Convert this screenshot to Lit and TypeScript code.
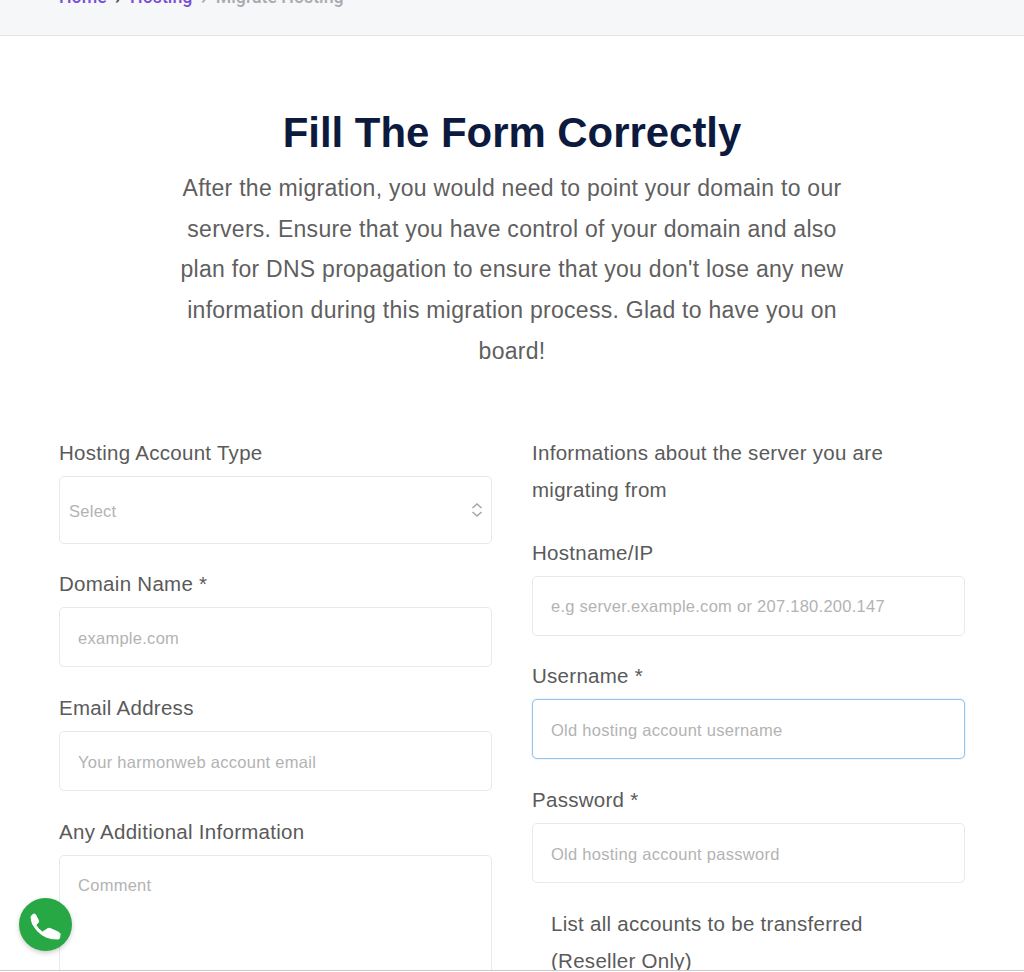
import { LitElement, html, css } from "lit";
import { customElement } from "lit/decorators.js";

@customElement("app-root")
export class AppRoot extends LitElement {
  static styles = css`
    :host {
      display: block;
      position: relative;
      height: 972px;
      overflow: hidden;
      background: #fff;
      font-family: "Liberation Sans", Arial, sans-serif;
      color: #555;
    }
    .page { height: 970px; overflow: hidden; border-bottom: 1px solid #c9c9cb; }
    .band {
      height: 36px;
      box-sizing: border-box;
      background: #f6f7f8;
      border-bottom: 1px solid #e1e3e4;
      overflow: hidden;
    }
    .crumbs {
      margin-top: -11px;
      padding-left: 59px;
      display: flex;
      gap: 7.7px;
      align-items: center;
      font: 500 17.8px/16px Roboto, sans-serif;
      color: #7a4fd6;
    }
    .crumbs .cur { color: #a9abb1; }
    .crumbs .sep { color: #555; font-size: 10px; }
    .crumbs .sep.cur { color: #a9abb1; }
    .intro { text-align: center; padding-top: 70px; }
    h1 {
      margin: 0;
      font: 700 41.9px/54px "Liberation Sans", Arial, sans-serif;
      color: #0c1a3e;
    }
    .intro p {
      margin: 0 auto;
      width: 680px;
      padding-top: 8px;
      font-size: 23px;
      letter-spacing: 0.27px;
      line-height: 40.7px;
      color: #5f5f5f;
    }
    .form {
      display: grid;
      grid-template-columns: 433px 433px;
      column-gap: 40px;
      padding: 62px 59px 0;
      align-items: start;
    }
    .field { margin-bottom: 21.8px; }
    label { display: block; font-size: 20.5px; letter-spacing: 0.28px; line-height: 37px; margin-bottom: 5px; color: #5a5a5a; }
    .ctl {
      box-sizing: border-box;
      width: 100%;
      height: 60px;
      display: flex;
      align-items: center;
      justify-content: space-between;
      padding: 2px 18px 0;
      border: 1px solid #e8e9ea;
      border-radius: 5px;
      font-size: 16.5px;
      letter-spacing: 0.27px;
      color: #b3b3b3;
      background: #fff;
    }
    .select { height: 68px; padding: 0 7px 0 9px; }
    .select span { padding-top: 3px; }
    .focus { border-color: #93c3ee; box-shadow: 0 0 2px #bcdcf6; }
    .area { height: 160px; align-items: flex-start; padding-top: 20px; }
    .info { margin: 0 0 26px; font-size: 20.5px; letter-spacing: 0.28px; line-height: 37px; color: #5a5a5a; }
    .indent { padding: 0 19px; }
    .call {
      position: absolute;
      left: 19px;
      top: 898px;
      width: 53px;
      height: 53px;
      border-radius: 50%;
      background: #28a745;
      box-shadow: 0 2px 5px rgba(0,0,0,.2);
    }
    .call svg { display: block; }
  `;

  render() {
    return html`
      <div class="page">
        <div class="band">
          <div class="crumbs">
            <span>Home</span><span class="sep">❯</span><span>Hosting</span><span class="sep cur">❯</span><span class="cur">Migrate Hosting</span>
          </div>
        </div>
        <div class="intro">
          <h1>Fill The Form Correctly</h1>
          <p>After the migration, you would need to point your domain to our servers. Ensure that you have control of your domain and also plan for DNS propagation to ensure that you don't lose any new information during this migration process. Glad to have you on board!</p>
        </div>
        <div class="form">
          <div>
            <div class="field">
              <label>Hosting Account Type</label>
              <div class="ctl select"><span>Select</span>
                <svg width="14" height="16" viewBox="0 0 14 16" fill="none" stroke="#a5a5a5" stroke-width="1.500"><path d="M2.500 6 7 2l4.500 4M2.500 10 7 14l4.500-4"/></svg>
              </div>
            </div>
            <div class="field"><label>Domain Name *</label><div class="ctl">example.com</div></div>
            <div class="field"><label>Email Address</label><div class="ctl">Your harmonweb account email</div></div>
            <div class="field"><label>Any Additional Information</label><div class="ctl area">Comment</div></div>
          </div>
          <div>
            <p class="info">Informations about the server you are migrating from</p>
            <div class="field"><label>Hostname/IP</label><div class="ctl">e.g server.example.com or 207.180.200.147</div></div>
            <div class="field"><label>Username *</label><div class="ctl focus">Old hosting account username</div></div>
            <div class="field"><label>Password *</label><div class="ctl">Old hosting account password</div></div>
            <div class="field indent"><label>List all accounts to be transferred (Reseller Only)</label></div>
          </div>
        </div>
      </div>
      <div class="call">
        <svg width="53" height="53" viewBox="4 3 53 53"><path fill="#fff" stroke="#fff" stroke-width="1" stroke-linejoin="round" d="M16 22.500Q16 20.500 18 19.500L19 19Q20 18.800 20.700 20L23.500 25.500Q24 27 22.800 28L20.800 30Q23 34 27.500 37L33 33.500Q34.500 33 36 33.800L44 37.500Q45.500 38.500 45 40L44.500 43Q44.300 44 43 44Q30 44.500 22 35.500Q16 29 16 22.500Z"/></svg>
      </div>
    `;
  }
}
